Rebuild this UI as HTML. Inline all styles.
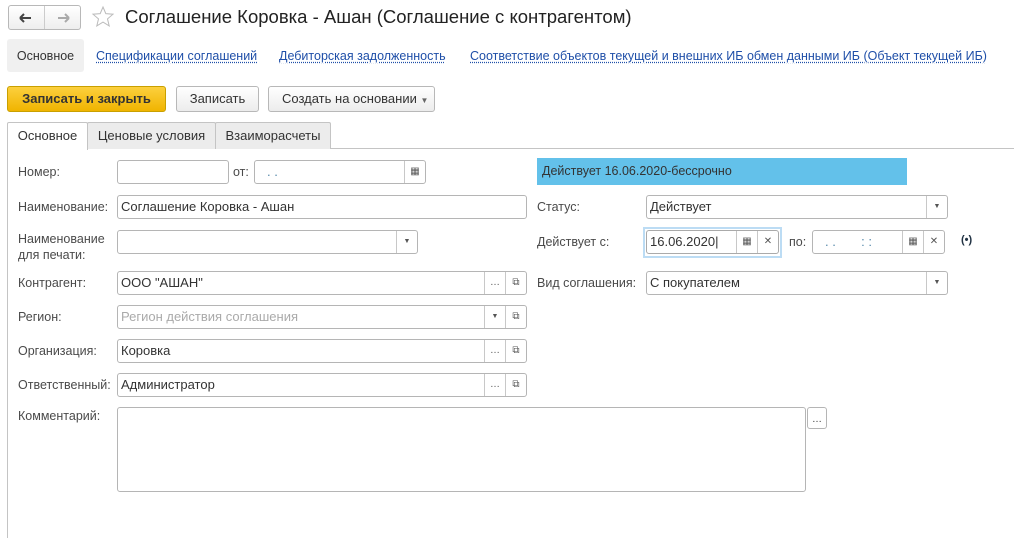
<!DOCTYPE html>
<html><head><meta charset="utf-8"><style>
*{box-sizing:border-box}
body{margin:0;width:1014px;height:533px;background:#fff;font-family:"Liberation Sans",Arial,sans-serif;font-size:13px;color:#333;position:relative;overflow:hidden}
.a{position:absolute}
.lbl{position:absolute;color:#4a4a4a;font-size:12.5px;line-height:15px}
.in{position:absolute;border:1px solid #b5b5b5;border-radius:3px;background:#fff;height:24px;line-height:22px;padding-left:3px;font-size:13px;color:#333;overflow:hidden;white-space:nowrap}
.btn{position:absolute;top:0;bottom:0;border-left:1px solid #c8c8c8;width:21px;text-align:center;color:#555;font-size:10px}
.lnk{position:absolute;top:49px;color:#1f4fa8;font-size:12.5px;text-decoration:underline;text-decoration-style:dotted;text-underline-offset:2px}
.b{position:absolute;border:1px solid #b8b8b8;border-radius:3px;background:linear-gradient(#fff,#ececec);height:26px;line-height:24px;text-align:center;font-size:13px;color:#333}
.tab{position:absolute;top:122px;height:27px;border:1px solid #c4c4c4;border-bottom:none;background:#ececec;line-height:26px;text-align:center;font-size:13px;color:#333;border-radius:2px 2px 0 0}
</style></head><body>
<div class="a" style="left:8px;top:5px;width:73px;height:25px;border:1px solid #b8b8b8;border-radius:3px;background:linear-gradient(#fff,#eee)"></div>
<div class="a" style="left:44px;top:6px;width:1px;height:23px;background:#ccc"></div>
<svg class="a" style="left:16px;top:11px" width="60" height="14"><path d="M4 7h11M4 7l4-4M4 7l4 4" stroke="#444" stroke-width="2" fill="none"/><path d="M42 7h11M53 7l-4-4M53 7l-4 4" stroke="#aaa" stroke-width="2" fill="none"/></svg>
<svg class="a" style="left:91px;top:5px" width="24" height="24"><path d="M12 2l2.8 6.6 7.2.6-5.5 4.7 1.7 7-6.2-3.8-6.2 3.8 1.7-7L2 9.2l7.2-.6z" fill="none" stroke="#bbb" stroke-width="1"/></svg>
<div class="a" style="left:125px;top:6px;font-size:18.5px;color:#222">Соглашение Коровка - Ашан (Соглашение с контрагентом)</div>
<div class="a" style="left:7px;top:39px;width:77px;height:33px;background:#f0f0f0;border-radius:3px;padding-top:10px;text-align:center;font-size:12.5px;color:#333">Основное</div>
<div class="lnk" style="left:96px">Спецификации соглашений</div>
<div class="lnk" style="left:279px">Дебиторская задолженность</div>
<div class="lnk" style="left:470px">Соответствие объектов текущей и внешних ИБ обмен данными ИБ (Объект текущей ИБ)</div>
<div class="b" style="left:7px;top:86px;width:159px;background:linear-gradient(#fcd03e,#f0b400);border-color:#c9a000;font-weight:bold;color:#333">Записать и закрыть</div>
<div class="b" style="left:176px;top:86px;width:83px">Записать</div>
<div class="b" style="left:268px;top:86px;width:167px;text-align:left;padding-left:13px">Создать на основании <span style="font-size:8px;color:#666">▼</span></div>
<div class="a" style="left:7px;top:148px;width:1010px;height:1px;background:#c4c4c4"></div>
<div class="a" style="left:7px;top:148px;width:1px;height:390px;background:#c4c4c4"></div>
<div class="tab" style="left:87px;width:129px">Ценовые условия</div>
<div class="tab" style="left:215px;width:116px">Взаиморасчеты</div>
<div class="tab" style="left:7px;width:81px;background:#fff;height:28px">Основное</div>

<div class="lbl" style="left:18px;top:165px">Номер:</div>
<div class="in" style="left:117px;top:160px;width:112px"></div>
<div class="lbl" style="left:233px;top:165px">от:</div>
<div class="in" style="left:254px;top:160px;width:172px;color:#58a;padding-left:12px">. .<div class="btn" style="right:0">▦</div></div>
<div class="a" style="left:537px;top:158px;width:370px;height:27px;background:#63c1ea;line-height:27px;padding-left:5px;font-size:12.5px;color:#333">Действует 16.06.2020-бессрочно</div>

<div class="lbl" style="left:18px;top:200px">Наименование:</div>
<div class="in" style="left:117px;top:195px;width:410px">Соглашение Коровка - Ашан</div>
<div class="lbl" style="left:537px;top:200px">Статус:</div>
<div class="in" style="left:646px;top:195px;width:302px">Действует<div class="btn" style="right:0;font-size:7px">▼</div></div>

<div class="lbl" style="left:18px;top:231px;line-height:16px">Наименование<br>для печати:</div>
<div class="in" style="left:117px;top:230px;width:301px"><div class="btn" style="right:0;font-size:7px">▼</div></div>
<div class="lbl" style="left:537px;top:235px">Действует с:</div>
<div class="a" style="left:643px;top:227px;width:139px;height:31px;border:2px solid #bcdcf4"></div>
<div class="in" style="left:646px;top:230px;width:133px;border-color:#aaa">16.06.2020|<div class="btn" style="right:21px">▦</div><div class="btn" style="right:0">✕</div></div>
<div class="lbl" style="left:789px;top:235px">по:</div>
<div class="in" style="left:812px;top:230px;width:133px;color:#58a;padding-left:12px">. . &nbsp; &nbsp; &nbsp; : :<div class="btn" style="right:21px;color:#555">▦</div><div class="btn" style="right:0;color:#555">✕</div></div>
<div class="a" style="left:961px;top:234px;font-size:11px;font-weight:bold;color:#234">(•)</div>

<div class="lbl" style="left:18px;top:276px">Контрагент:</div>
<div class="in" style="left:117px;top:271px;width:410px">ООО "АШАН"<div class="btn" style="right:21px">…</div><div class="btn" style="right:0">⧉</div></div>
<div class="lbl" style="left:537px;top:276px">Вид соглашения:</div>
<div class="in" style="left:646px;top:271px;width:302px">С покупателем<div class="btn" style="right:0;font-size:7px">▼</div></div>

<div class="lbl" style="left:18px;top:310px">Регион:</div>
<div class="in" style="left:117px;top:305px;width:410px;color:#aaa">Регион действия соглашения<div class="btn" style="right:21px;font-size:7px">▼</div><div class="btn" style="right:0">⧉</div></div>
<div class="lbl" style="left:18px;top:344px">Организация:</div>
<div class="in" style="left:117px;top:339px;width:410px">Коровка<div class="btn" style="right:21px">…</div><div class="btn" style="right:0">⧉</div></div>
<div class="lbl" style="left:18px;top:378px">Ответственный:</div>
<div class="in" style="left:117px;top:373px;width:410px">Администратор<div class="btn" style="right:21px">…</div><div class="btn" style="right:0">⧉</div></div>
<div class="lbl" style="left:18px;top:409px">Комментарий:</div>
<div class="in" style="left:117px;top:407px;width:689px;height:85px"></div>
<div class="in" style="left:807px;top:407px;width:20px;height:22px;text-align:center;padding:0;font-size:10px;line-height:24px">…</div>
</body></html>
